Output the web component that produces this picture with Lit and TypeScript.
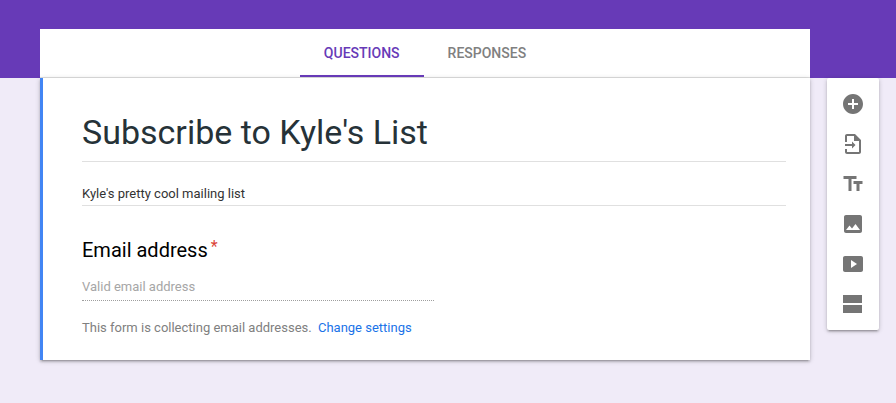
import { LitElement, html, css, svg } from "lit";
import { customElement } from "lit/decorators.js";

const ICONS = [
  svg`<path d="M12 2C6.48 2 2 6.48 2 12s4.48 10 10 10 10-4.48 10-10S17.52 2 12 2zm5 11h-4v4h-2v-4H7v-2h4V7h2v4h4v2z"/>`,
  svg`<path d="M14 2H6c-1.1 0-2 .9-2 2v6h2V4h7v5h5v11H6v-3H4v3c0 1.1.9 2 2 2h12c1.1 0 2-.9 2-2V8l-6-6z"/><path d="M4 12h7V9.5l3.5 3.5-3.5 3.5V14H4z"/>`,
  svg`<path d="M2.5 4v3h5v12h3V7h5V4h-13zm19 5h-9v3h3v7h3v-7h3V9z"/>`,
  svg`<path d="M21 19V5c0-1.1-.9-2-2-2H5c-1.1 0-2 .9-2 2v14c0 1.1.9 2 2 2h14c1.1 0 2-.9 2-2zM8.5 13.5l2.5 3.01L14.5 12l4.5 6H5l3.5-4.5z"/>`,
  svg`<path d="M20 4H4C2.9 4 2 4.9 2 6v12c0 1.1.9 2 2 2h16c1.1 0 2-.9 2-2V6c0-1.1-.9-2-2-2zM10 16V8l6 4-6 4z"/>`,
  svg`<path d="M2 3h19v8H2zM2 13h19v8H2z"/>`,
];

@customElement("app-root")
export class AppRoot extends LitElement {
  static styles = css`
    :host {
      display: block;
      height: 403px;
      overflow: hidden;
      background: #f0ebf8;
      font-family: Roboto, sans-serif;
    }
    .band { height: 78px; background: #673ab7; }
    .main {
      display: flex;
      align-items: flex-start;
      gap: 17px;
      margin: -49px 0 0 40px;
    }
    .column { width: 770px; flex: none; }
    .tabs {
      height: 48px;
      background: #fff;
      border-bottom: 1px solid #e0e0e0;
      display: flex;
      justify-content: center;
    }
    .tab {
      padding: 0 24px;
      height: 48px;
      display: flex;
      align-items: center;
      justify-content: center;
      box-sizing: border-box;
      font-size: 14px;
      font-weight: 500;
      color: #808080;
    }
    .tab.active {
      color: #673ab7;
      border-bottom: 2px solid #673ab7;
      padding-top: 2px;
    }
    .card {
      height: 282px;
      box-sizing: border-box;
      background: #fff;
      border-left: 3px solid #4285f4;
      padding: 32px 24px 0 39px;
      box-shadow: 0 2px 2px rgba(0, 0, 0, 0.14), 0 3px 1px -2px rgba(0, 0, 0, 0.12), 0 1px 5px rgba(0, 0, 0, 0.2);
    }
    h1 {
      margin: 0;
      height: 51px;
      line-height: 44px;
      font-size: 34px;
      font-weight: 400;
      color: #263238;
      border-bottom: 1px solid #e0e0e0;
    }
    .desc {
      height: 44px;
      box-sizing: border-box;
      padding-top: 23px;
      line-height: 18px;
      font-size: 13px;
      color: #333;
      border-bottom: 1px solid #e0e0e0;
    }
    .question {
      margin-top: 31px;
      line-height: 26px;
      font-size: 20px;
      color: #000;
      display: flex;
    }
    .star { color: #db4437; font-size: 16px; margin: 2px 0 0 3px; line-height: 16px; }
    .input {
      width: 352px;
      height: 32px;
      box-sizing: border-box;
      margin-top: 6px;
      padding-top: 9px;
      line-height: 18px;
      font-size: 13px;
      color: #a6a6a6;
      border-bottom: 1px dotted #9e9e9e;
    }
    .note {
      margin-top: 18px;
      line-height: 18px;
      font-size: 13px;
      color: #808080;
    }
    .note a { color: #1a73e8; margin-left: 3px; text-decoration: none; }
    .tools {
      margin-top: 49px;
      width: 52px;
      height: 252px;
      box-sizing: border-box;
      padding-top: 6px;
      flex: none;
      background: #fff;
      border-radius: 2px;
      box-shadow: 0 2px 2px rgba(0, 0, 0, 0.14), 0 3px 1px -2px rgba(0, 0, 0, 0.12), 0 1px 5px rgba(0, 0, 0, 0.2);
      display: flex;
      flex-direction: column;
      align-items: center;
    }
    .tool { width: 24px; height: 24px; padding: 8px 0; fill: #757575; display: block; }
  `;

  render() {
    return html`
      <div class="band"></div>
      <div class="main">
        <div class="column">
          <div class="tabs">
            <div class="tab active">QUESTIONS</div>
            <div class="tab">RESPONSES</div>
          </div>
          <div class="card">
            <h1>Subscribe to Kyle's List</h1>
            <div class="desc">Kyle's pretty cool mailing list</div>
            <div class="question">Email address<span class="star">*</span></div>
            <div class="input">Valid email address</div>
            <div class="note">This form is collecting email addresses. <a href="#">Change settings</a></div>
          </div>
        </div>
        <div class="tools">
          ${ICONS.map((i) => html`<svg class="tool" viewBox="0 0 24 24">${i}</svg>`)}
        </div>
      </div>
    `;
  }
}
